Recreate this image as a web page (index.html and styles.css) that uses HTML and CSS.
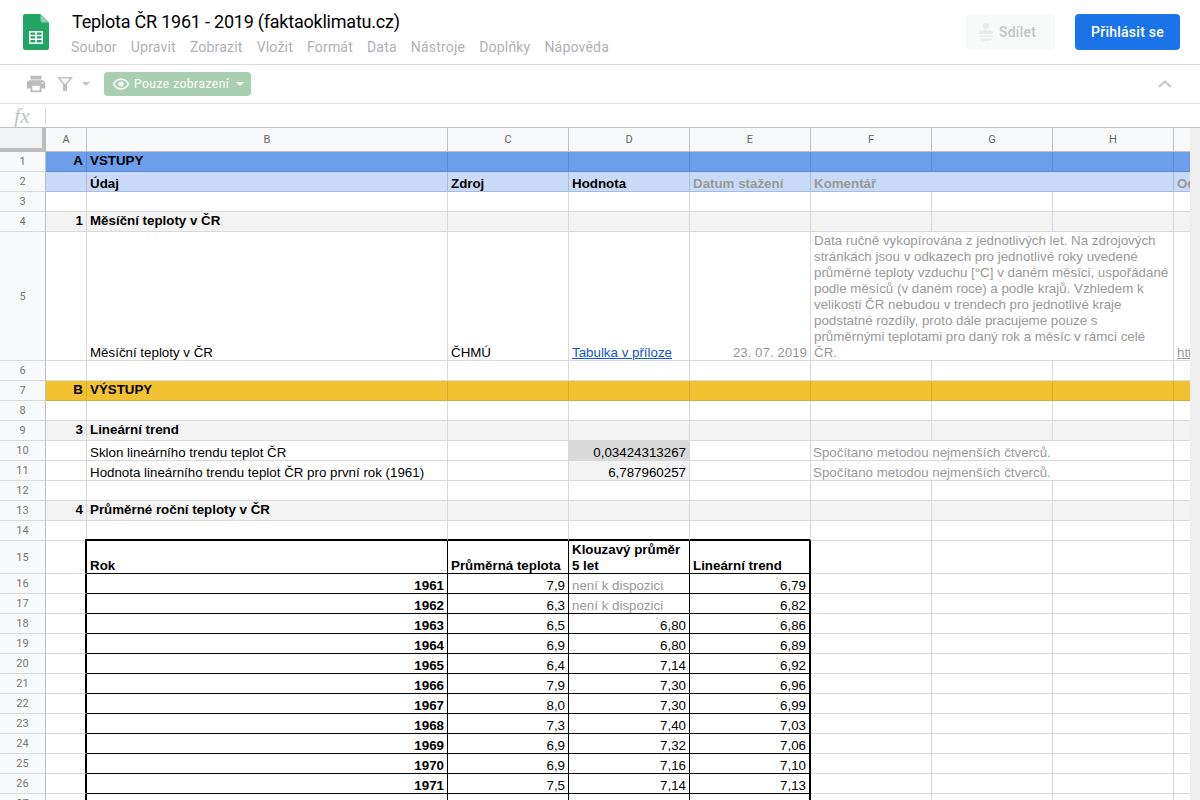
FILE: index.html
```html
<!DOCTYPE html>
<html>
    <head>
        <title>Teplota ČR 1961 - 2019 (faktaoklimatu.cz)</title>
        <meta name="viewport" content="width=device-width, initial-scale=1">
        <link rel="stylesheet" href="styles.css">
    </head>
    <body>
        <header class="top-bar">
            <svg class="logo" viewBox="0 0 26 36" width="26" height="36">
                <path fill="#23a566" d="M2 0h15.500l8.500 8.500V34a2 2 0 0 1-2 2H2a2 2 0 0 1-2-2V2a2 2 0 0 1 2-2z"/>
                <path fill="#8ed1b1" d="M17.500 0l8.500 8.500h-6.500a2 2 0 0 1-2-2z"/>
                <path fill="#fff" d="M6 17h14v13H6zm1.500 1.500v2.200h4.700v-2.200zm6.300 0v2.200h4.700v-2.200zm-6.300 3.700v2.300h4.700v-2.300zm6.300 0v2.300h4.700v-2.300zm-6.300 3.800v2.500h4.700V26zm6.300 0v2.500h4.700V26z" fill-rule="evenodd"/>
            </svg>
            <div class="doc-info">
                <div class="doc-title">Teplota ČR 1961 - 2019 (faktaoklimatu.cz)</div>
                <nav class="menu">
                    <span>Soubor</span>
                    <span>Upravit</span>
                    <span>Zobrazit</span>
                    <span>Vložit</span>
                    <span>Formát</span>
                    <span>Data</span>
                    <span>Nástroje</span>
                    <span>Doplňky</span>
                    <span>Nápověda</span>
                </nav>
            </div>
            <button class="btn btn-share">
                <svg viewBox="0 0 14 20" width="14" height="20">
                    <circle cx="7" cy="4" r="3" fill="#eaecec"/>
                    <path fill="#eaecec" d="M0 11c0-2 3-3 7-3s7 1 7 3v1H0zM0 13.500h14V15H0zM1 16.500h12c0 1.500-1.500 2.500-6 2.500s-6-1-6-2.500z"/>
                </svg>
                Sdílet
            </button>
            <button class="btn btn-login">Přihlásit se</button>
        </header>

        <div class="toolbar">
            <svg class="tool-print" viewBox="0 0 24 24" width="22" height="22">
                <path fill="#bbb" d="M19 8H5c-1.660 0-3 1.340-3 3v6h4v4h12v-4h4v-6c0-1.660-1.340-3-3-3zm-3 11H8v-5h8v5zm3-7c-.55 0-1-.45-1-1s.45-1 1-1 1 .45 1 1-.45 1-1 1zm-1-9H6v4h12V3z"/>
            </svg>
            <svg class="tool-filter" viewBox="0 0 16 16" width="16" height="16">
                <path fill="#c0c0c0" fill-rule="evenodd" d="M0 1h16l-6 7.200V15H6V8.200zM3.200 2.500L8 8.300l4.800-5.800z"/>
            </svg>
            <span class="caret caret-grey"></span>
            <div class="view-only">
                <svg viewBox="0 0 24 24" width="18" height="18">
                    <path fill="#fff" d="M12 4.500C7 4.500 2.730 7.610 1 12c1.730 4.390 6 7.500 11 7.500s9.270-3.110 11-7.500c-1.730-4.390-6-7.500-11-7.500zM12 17.500c-3.790 0-7.170-2.130-8.820-5.500C4.830 8.630 8.210 6.500 12 6.500s7.170 2.130 8.820 5.500c-1.650 3.370-5.030 5.500-8.820 5.500zm0-9a3.500 3.500 0 1 0 0 7 3.500 3.500 0 0 0 0-7z"/>
                </svg>
                <span>Pouze zobrazení</span>
                <span class="caret"></span>
            </div>
            <svg class="tool-collapse" viewBox="0 0 14 8" width="14" height="8">
                <path fill="none" stroke="#c4c4c4" stroke-width="2" d="M1 7l6-5.500L13 7"/>
            </svg>
        </div>

        <div class="formula-bar">
            <span class="fx">fx</span>
            <span class="fx-sep"></span>
        </div>

        <div class="sheet-wrap">
            <div class="sheet-view">
                <table class="sheet">
                    <colgroup>
                        <col class="col-head"><col class="col-a"><col class="col-b">
                        <col class="col-n"><col class="col-n"><col class="col-n">
                        <col class="col-n"><col class="col-n"><col class="col-n"><col class="col-n">
                    </colgroup>
                    <tr class="col-letters">
                        <th class="corner"></th><th>A</th><th>B</th><th>C</th><th>D</th><th>E</th><th>F</th><th>G</th><th>H</th><th></th>
                    </tr>
                    <tr class="blue title-row">
                        <th>1</th><td class="r b">A</td><td class="b">VSTUPY</td><td></td><td></td><td></td><td></td><td></td><td></td><td></td>
                    </tr>
                    <tr class="pale">
                        <th>2</th><td></td><td class="b">Údaj</td><td class="b">Zdroj</td><td class="b">Hodnota</td><td class="b g">Datum stažení</td><td class="b g" colspan="3">Komentář</td><td class="b g">Odkaz</td>
                    </tr>
                    <tr>
                        <th>3</th><td></td><td></td><td></td><td></td><td></td><td></td><td></td><td></td><td></td>
                    </tr>
                    <tr class="band title-row">
                        <th>4</th><td class="r b">1</td><td class="b">Měsíční teploty v ČR</td><td></td><td></td><td></td><td></td><td></td><td></td><td></td>
                    </tr>
                    <tr class="tall">
                        <th>5</th><td></td><td>Měsíční teploty v ČR</td><td>ČHMÚ</td><td><a class="link" href="#">Tabulka v příloze</a></td><td class="r g">23. 07. 2019</td>
                        <td class="g wrap" colspan="3">Data ručně vykopírována z jednotlivých let. Na zdrojových stránkách jsou v odkazech pro jednotlivé roky uvedené průměrné teploty vzduchu [°C] v daném měsíci, uspořádané podle měsíců (v daném roce) a podle krajů. Vzhledem k velikosti ČR nebudou v trendech pro jednotlivé kraje podstatné rozdíly, proto dále pracujeme pouze s průměrnými teplotami pro daný rok a měsíc v rámci celé ČR.</td>
                        <td class="g under">https://</td>
                    </tr>
                    <tr>
                        <th>6</th><td></td><td></td><td></td><td></td><td></td><td></td><td></td><td></td><td></td>
                    </tr>
                    <tr class="amber title-row">
                        <th>7</th><td class="r b">B</td><td class="b">VÝSTUPY</td><td></td><td></td><td></td><td></td><td></td><td></td><td></td>
                    </tr>
                    <tr>
                        <th>8</th><td></td><td></td><td></td><td></td><td></td><td></td><td></td><td></td><td></td>
                    </tr>
                    <tr class="band title-row">
                        <th>9</th><td class="r b">3</td><td class="b">Lineární trend</td><td></td><td></td><td></td><td></td><td></td><td></td><td></td>
                    </tr>
                    <tr>
                        <th>10</th><td></td><td>Sklon lineárního trendu teplot ČR</td><td></td><td class="r fill-dark">0,03424313267</td><td></td><td class="g note" colspan="3">Spočítano metodou nejmenších čtverců.</td><td></td>
                    </tr>
                    <tr>
                        <th>11</th><td></td><td>Hodnota lineárního trendu teplot ČR pro první rok (1961)</td><td></td><td class="r fill-light">6,787960257</td><td></td><td class="g note" colspan="3">Spočítano metodou nejmenších čtverců.</td><td></td>
                    </tr>
                    <tr>
                        <th>12</th><td></td><td></td><td></td><td></td><td></td><td></td><td></td><td></td><td></td>
                    </tr>
                    <tr class="band title-row">
                        <th>13</th><td class="r b">4</td><td class="b">Průměrné roční teploty v ČR</td><td></td><td></td><td></td><td></td><td></td><td></td><td></td>
                    </tr>
                    <tr class="above-box">
                        <th>14</th><td class="box-corner"></td><td></td><td></td><td></td><td></td><td></td><td></td><td></td><td></td>
                    </tr>
                    <tr class="box box-head">
                        <th>15</th><td></td><td class="b">Rok</td><td class="b">Průměrná teplota</td><td class="b wrap">Klouzavý průměr 5 let</td><td class="b">Lineární trend</td><td></td><td></td><td></td><td></td>
                    </tr>
                    <tr class="box">
                        <th>16</th><td></td><td class="r b">1961</td><td class="r">7,9</td><td class="g">není k dispozici</td><td class="r">6,79</td><td></td><td></td><td></td><td></td>
                    </tr>
                    <tr class="box">
                        <th>17</th><td></td><td class="r b">1962</td><td class="r">6,3</td><td class="g">není k dispozici</td><td class="r">6,82</td><td></td><td></td><td></td><td></td>
                    </tr>
                    <tr class="box">
                        <th>18</th><td></td><td class="r b">1963</td><td class="r">6,5</td><td class="r">6,80</td><td class="r">6,86</td><td></td><td></td><td></td><td></td>
                    </tr>
                    <tr class="box">
                        <th>19</th><td></td><td class="r b">1964</td><td class="r">6,9</td><td class="r">6,80</td><td class="r">6,89</td><td></td><td></td><td></td><td></td>
                    </tr>
                    <tr class="box">
                        <th>20</th><td></td><td class="r b">1965</td><td class="r">6,4</td><td class="r">7,14</td><td class="r">6,92</td><td></td><td></td><td></td><td></td>
                    </tr>
                    <tr class="box">
                        <th>21</th><td></td><td class="r b">1966</td><td class="r">7,9</td><td class="r">7,30</td><td class="r">6,96</td><td></td><td></td><td></td><td></td>
                    </tr>
                    <tr class="box">
                        <th>22</th><td></td><td class="r b">1967</td><td class="r">8,0</td><td class="r">7,30</td><td class="r">6,99</td><td></td><td></td><td></td><td></td>
                    </tr>
                    <tr class="box">
                        <th>23</th><td></td><td class="r b">1968</td><td class="r">7,3</td><td class="r">7,40</td><td class="r">7,03</td><td></td><td></td><td></td><td></td>
                    </tr>
                    <tr class="box">
                        <th>24</th><td></td><td class="r b">1969</td><td class="r">6,9</td><td class="r">7,32</td><td class="r">7,06</td><td></td><td></td><td></td><td></td>
                    </tr>
                    <tr class="box">
                        <th>25</th><td></td><td class="r b">1970</td><td class="r">6,9</td><td class="r">7,16</td><td class="r">7,10</td><td></td><td></td><td></td><td></td>
                    </tr>
                    <tr class="box">
                        <th>26</th><td></td><td class="r b">1971</td><td class="r">7,5</td><td class="r">7,14</td><td class="r">7,13</td><td></td><td></td><td></td><td></td>
                    </tr>
                    <tr class="box">
                        <th>27</th><td></td><td></td><td></td><td></td><td></td><td></td><td></td><td></td><td></td>
                    </tr>
                </table>
            </div>
            <div class="scrollbar"></div>
        </div>
    </body>
</html>
```

FILE: styles.css
```css
html, body {
    height: 100%;
    margin: 0;
    overflow: hidden;
    background-color: #fff;
}

body {
    display: flex;
    flex-direction: column;
    font-family: Roboto, sans-serif;
}

/* top bar */
.top-bar {
    display: flex;
    align-items: flex-start;
    height: 64px;
    flex: none;
    border-bottom: 1px solid #dadce0;
}

.logo {
    margin: 14px 23px 0 23px;
    flex: none;
}

.doc-info {
    flex: 1;
}

.doc-title {
    margin-top: 11px;
    font-size: 18px;
    line-height: 22px;
    letter-spacing: -0.22px;
    color: #000;
}

.menu {
    display: flex;
    gap: 14px;
    margin-top: 4px;
    margin-left: -1px;
    font-size: 14px;
    line-height: 20px;
    letter-spacing: 0.2px;
    color: #aeb1b5;
}

.btn {
    height: 36px;
    margin-top: 14px;
    border: 0;
    border-radius: 4px;
    font-family: Roboto, sans-serif;
    font-size: 14px;
    font-weight: 500;
    letter-spacing: 0.25px;
}

.btn-share {
    display: flex;
    align-items: center;
    gap: 6px;
    width: 89px;
    padding: 0 0 0 13px;
    margin-right: 20px;
    background-color: #f8f9f9;
    color: #c4c6c6;
}

.btn-login {
    width: 105px;
    margin-right: 20px;
    padding: 0;
    background-color: #1a73e8;
    color: #fff;
}

/* toolbar */
.toolbar {
    display: flex;
    align-items: center;
    height: 38px;
    flex: none;
    border-bottom: 1px solid #e0e0e0;
}

.tool-print {
    margin-left: 25px;
}

.tool-filter {
    margin-left: 10px;
}

.caret {
    width: 0;
    height: 0;
    border-left: 4.500px solid transparent;
    border-right: 4.500px solid transparent;
    border-top: 4.500px solid #fff;
}

.caret-grey {
    margin-left: 9px;
    border-top-color: #c4c4c4;
}

.view-only {
    display: flex;
    align-items: center;
    width: 147px;
    height: 24px;
    box-sizing: border-box;
    margin-left: 14px;
    padding-left: 8px;
    border-radius: 4px;
    background-color: #a8cfb2;
    color: #fff;
    font-size: 12px;
    letter-spacing: 0.5px;
}

.view-only span:first-of-type {
    margin-left: 4px;
    margin-right: 7px;
}

.tool-collapse {
    margin-left: auto;
    margin-right: 28px;
}

/* formula bar */
.formula-bar {
    display: flex;
    align-items: center;
    height: 23px;
    flex: none;
    border-bottom: 1px solid #c0c0c0;
}

.fx {
    width: 45px;
    box-sizing: border-box;
    padding-left: 14px;
    font-family: "Liberation Serif", serif;
    font-style: italic;
    font-size: 22px;
    color: #c2c2c2;
}

.fx-sep {
    width: 1px;
    height: 16px;
    background-color: #dadada;
}

/* sheet */
.sheet-wrap {
    display: flex;
    flex: 1;
    min-height: 0;
}

.sheet-view {
    flex: 1;
    min-width: 0;
    overflow: hidden;
}

.scrollbar {
    width: 10px;
    flex: none;
    background-color: #eee;
}

.sheet {
    table-layout: fixed;
    width: 1295px;
    border-collapse: separate;
    border-spacing: 0;
    font-family: "Liberation Sans", Arial, sans-serif;
    font-size: 13.330px;
    line-height: 16px;
    color: #000;
}

.col-head { width: 46px; }
.col-a { width: 41px; }
.col-b { width: 361px; }
.col-n { width: 121px; }

.sheet tr {
    height: 20px;
}

.sheet td, .sheet th {
    box-sizing: border-box;
    height: 20px;
    padding: 0 3px 0 3px;
    overflow: hidden;
    white-space: nowrap;
    border-right: 1px solid #d9d9d9;
    border-bottom: 1px solid #d9d9d9;
    vertical-align: bottom;
}

/* pulls bottom aligned text one pixel down */
.sheet td::after {
    content: "";
    display: block;
    margin-top: -1px;
}

.sheet th {
    padding: 0;
    background-color: #f8f9fa;
    border-right-color: #c0c0c0;
    font-family: Roboto, sans-serif;
    font-size: 11px;
    font-weight: 400;
    color: #777;
    text-align: center;
    vertical-align: middle;
}

.col-letters td, .col-letters th {
    height: 24px;
    border-bottom-color: #c0c0c0;
}

.sheet .col-letters th {
    color: #666;
    height: 24px;
}

.sheet .corner {
    background-color: #f1f3f4;
    border-right: 4px solid #bdbdbd;
    border-bottom: 4px solid #bdbdbd;
}

.r { text-align: right; }
.b { font-weight: bold; }
.g { color: #999; }
.under { text-decoration: underline; }

.sheet .note {
    padding-left: 2px;
}

.sheet .wrap {
    white-space: normal;
}

.link {
    color: #1155cc;
}

.sheet .title-row td {
    padding-top: 1px;
    vertical-align: top;
}

.blue td {
    background-color: #6d9eeb;
    border-color: #5b8ad4;
}

.pale td {
    background-color: #c9daf8;
    border-color: #a9bcdc;
}

.band td {
    background-color: #f3f3f3;
}

.amber td {
    background-color: #f1c232;
    border-color: #d8ac26;
}

.fill-dark { background-color: #d9d9d9; }
.fill-light { background-color: #f3f3f3; }

.sheet .tall td, .sheet .tall th {
    height: 129px;
}

.sheet .box-head td, .sheet .box-head th {
    height: 33px;
}

.sheet .tall th, .sheet .box-head th {
    padding-top: 1px;
}

/* black frame around the yearly table */
.above-box td:nth-child(n+3):nth-child(-n+6) {
    border-bottom: 2px solid #000;
}

.box td:nth-child(n+3):nth-child(-n+6) {
    border-bottom-color: #000;
    border-right-color: #000;
}

.box td:nth-child(2), .box td:nth-child(6) {
    border-right: 2px solid #000;
}

.sheet .box-corner {
    position: relative;
    overflow: visible;
}

.box-corner::before {
    content: "";
    position: absolute;
    right: -1px;
    bottom: -1px;
    width: 2px;
    height: 2px;
    background-color: #000;
}
```
